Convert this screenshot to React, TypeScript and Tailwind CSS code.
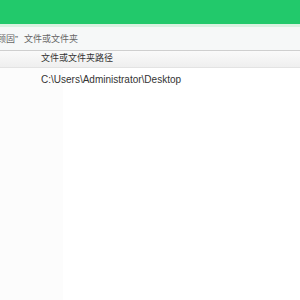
export default function App() {
  return (
    <div className="w-[300px] h-[300px] bg-white overflow-hidden flex flex-col" style={{ fontFamily: '"Liberation Sans", "Noto Sans CJK SC", sans-serif' }}>
      <div className="h-[24px] bg-[#22c96b] shrink-0" />
      <div className="h-[3px] bg-[#d9f2e1] shrink-0" />
      <div className="h-[24px] bg-[#f6f8f8] border-b border-[#cfcfcf] flex items-center shrink-0 pt-[2px] text-[9px] text-[#666] whitespace-nowrap">
        <span className="-ml-[3px]">顾固”</span>
        <span className="ml-[6px]">文件或文件夹</span>
      </div>
      <div className="h-[17px] bg-gradient-to-b from-[#fafafa] to-[#efefef] border-b border-[#e3e3e3] flex items-center shrink-0">
        <span className="ml-[41px] text-[9px] text-[#333] whitespace-nowrap">文件或文件夹路径</span>
      </div>
      <div className="flex-1 flex">
        <div className="w-[63px] bg-[#fcfcfc] flex flex-col">
          <div className="h-[22px]" />
        </div>
        <div className="flex-1 flex flex-col">
          <div className="h-[22px] flex items-center -ml-[22px]">
            <span className="text-[10px] text-[#333] whitespace-nowrap">C:\Users\Administrator\Desktop</span>
          </div>
        </div>
      </div>
    </div>
  );
}
